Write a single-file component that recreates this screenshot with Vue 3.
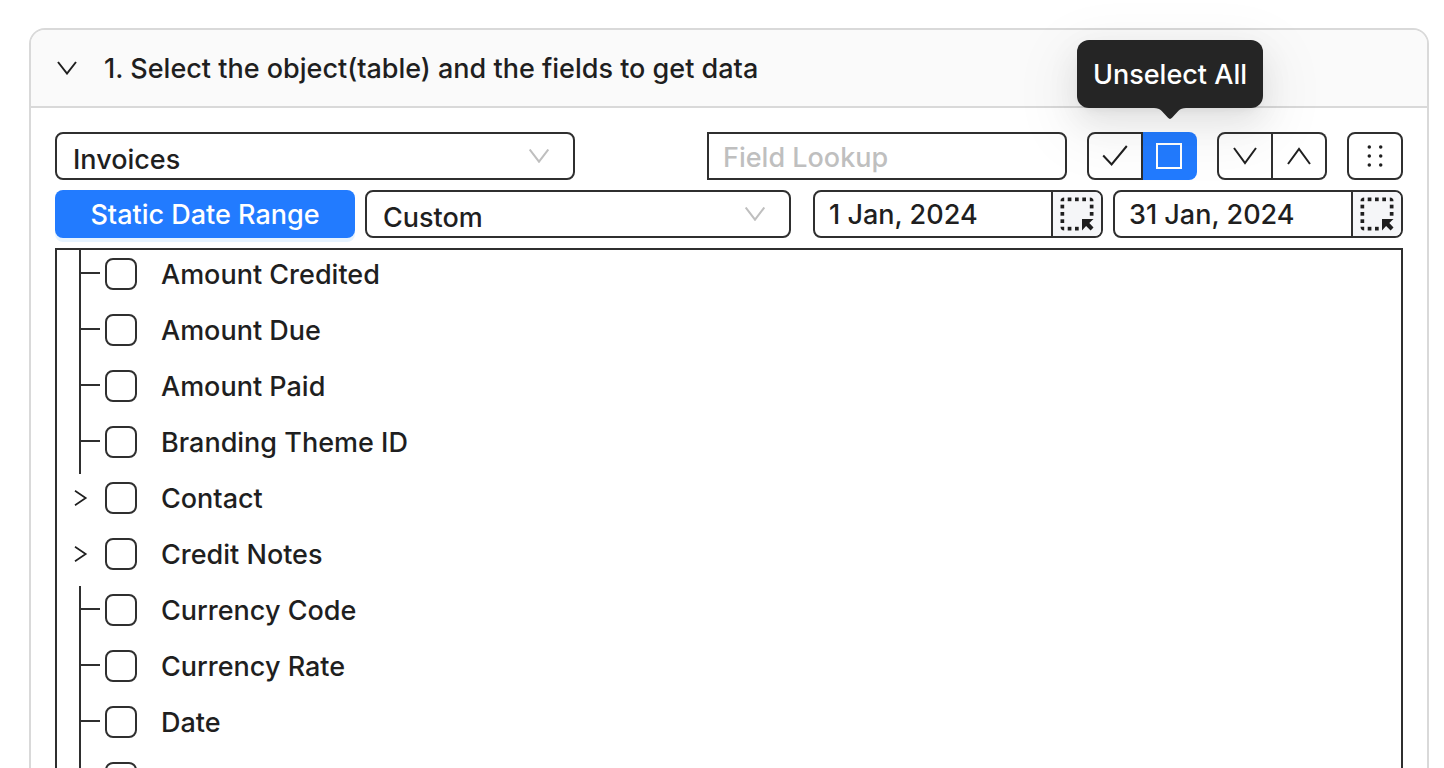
<script setup>
import { ref } from 'vue'

const objectName = ref('Invoices')
const lookup = ref('')
const range = ref('Custom')
const dates = ref([
  { id: 'date-from', label: 'Start date', value: '1 Jan, 2024' },
  { id: 'date-to', label: 'End date', value: '31 Jan, 2024' },
])
const fields = ref([
  { name: 'Amount Credited', checked: false },
  { name: 'Amount Due', checked: false },
  { name: 'Amount Paid', checked: false },
  { name: 'Branding Theme ID', checked: false },
  { name: 'Contact', checked: false, parent: true },
  { name: 'Credit Notes', checked: false, parent: true },
  { name: 'Currency Code', checked: false },
  { name: 'Currency Rate', checked: false },
  { name: 'Date', checked: false },
  { name: 'Due Date', checked: false },
])
const setAll = (value) => fields.value.forEach((f) => (f.checked = value))

// Dashed square outline of the range picker icon, on a 34px grid
const dots = [
  [7.7, 0.5], [15, 0.5], [22.3, 0.5],
  [0.5, 7.7], [0.5, 15], [0.5, 22.3],
  [29.8, 7.7], [29.8, 15],
  [7.7, 29.8], [15, 29.8],
]
</script>

<template>
  <main class="page">
    <section class="card">
      <header class="head">
        <button class="collapse" type="button" aria-label="Collapse section">
          <svg width="20" height="14" viewBox="0 0 20 14"><path d="M1 1 10 12.5 19 1" /></svg>
        </button>
        <h1>1. Select the object(table) and the fields to get data</h1>
      </header>

      <div class="body">
        <div class="row top">
          <div class="select object">
            <select v-model="objectName" aria-label="Object">
              <option>Invoices</option>
            </select>
            <svg width="20" height="14" viewBox="0 0 20 14"><path d="M.7.5 10 12.7 19.3.5" /></svg>
          </div>
          <div class="tools">
            <input v-model="lookup" class="lookup" type="text" placeholder="Field Lookup" aria-label="Field Lookup" />
            <div class="group">
              <button type="button" aria-label="Select All" @click="setAll(true)">
                <svg width="26" height="22" viewBox="0 0 26 22"><path d="M1.2 10.5 9.6 19.5 24.8 1" /></svg>
              </button>
              <button class="active" type="button" aria-describedby="tip" aria-label="Unselect All" @click="setAll(false)">
                <svg width="26" height="26" viewBox="0 0 26 26"><rect x="1" y="1" width="24" height="24" /></svg>
              </button>
              <div id="tip" class="tooltip" role="tooltip">
                Unselect All
                <svg class="arrow" width="32" height="12" viewBox="0 0 32 12">
                  <path d="M0 0H32C28.500 0 26.500.8 24.500 2.800L18 9.800Q16 12 14 9.800L7.500 2.800C5.500.8 3.500 0 0 0Z" />
                </svg>
              </div>
            </div>
            <div class="group">
              <button type="button" aria-label="Expand all">
                <svg width="24" height="18" viewBox="0 0 24 18"><path d="M1 1 12 16 23 1" /></svg>
              </button>
              <button type="button" aria-label="Collapse all">
                <svg width="24" height="18" viewBox="0 0 24 18"><path d="M1 17 12 2 23 17" /></svg>
              </button>
            </div>
            <div class="group single">
              <button type="button" aria-label="Rearrange">
                <svg class="solid" width="16" height="22" viewBox="0 0 16 22">
                  <template v-for="y in [2, 11, 20]" :key="y">
                    <circle cx="2.300" :cy="y" r="1.750" />
                    <circle cx="13.700" :cy="y" r="1.750" />
                  </template>
                </svg>
              </button>
            </div>
          </div>
        </div>

        <div class="row">
          <button class="primary" type="button">Static Date Range</button>
          <div class="select range">
            <select v-model="range" aria-label="Date range">
              <option>Custom</option>
            </select>
            <svg width="20" height="14" viewBox="0 0 20 14"><path d="M.7.5 10 12.7 19.3.5" /></svg>
          </div>
          <div class="dates">
            <div v-for="d in dates" :key="d.id" class="date">
              <input :id="d.id" v-model="d.value" type="text" :aria-label="d.label" />
              <button type="button" :aria-label="'Pick cell for ' + d.label">
                <svg class="solid" width="34" height="34" viewBox="0 0 34 34">
                  <rect v-for="(p, i) in dots" :key="i" :x="p[0]" :y="p[1]" width="3.700" height="3.700" />
                  <path d="M4.200.5v3.700H.5Q.5.500 4.200.5ZM29.800.5v3.700h3.700Q33.500.5 29.800.5ZM.5 29.800h3.700v3.700Q.5 33.500.5 29.800Z" />
                  <path d="M22 22h11.500l-4.200 4 4.200 4.500-2.900 2.900-4.500-4.300-4.100 4.400Z" />
                </svg>
              </button>
            </div>
          </div>
        </div>

        <ul class="tree">
          <li v-for="f in fields" :key="f.name">
            <button v-if="f.parent" class="twig" type="button" :aria-label="'Expand ' + f.name">
              <svg width="14" height="16" viewBox="0 0 14 16"><path d="M1 .8 11.700 8 1 15.200" stroke-width="1.700" /></svg>
            </button>
            <span v-else class="twig line"></span>
            <label><input v-model="f.checked" type="checkbox" /><span>{{ f.name }}</span></label>
          </li>
        </ul>
      </div>
    </section>
  </main>
</template>

<style>
body {
  margin: 0;
  background: #fff;
}
</style>

<style scoped>
* {
  box-sizing: border-box;
}
.page {
  height: 100vh;
  overflow: hidden;
  padding: 28px 15px 0 29px;
  color: #1f1f1f;
  font: 450 27px/44px Inter, "Liberation Sans", sans-serif;
}
button,
input,
select {
  margin: 0;
  padding: 0;
  border: 0;
  border-radius: 0;
  background: none;
  color: inherit;
  font: inherit;
  appearance: none;
  outline: none;
}
button {
  display: flex;
  align-items: center;
  justify-content: center;
  cursor: pointer;
}
svg {
  display: block;
  flex: none;
  fill: none;
  stroke: currentColor;
  stroke-width: 2;
}
.solid {
  fill: currentColor;
  stroke: none;
}
.card {
  border: 2px solid #d9d9d9;
  border-radius: 16px;
}
.head {
  display: flex;
  align-items: center;
  gap: 27px;
  height: 78px;
  padding: 0 26px;
  border-bottom: 2px solid #d9d9d9;
  border-radius: 14px 14px 0 0;
  background: #fafafa;
}
h1 {
  margin: 0;
  padding-top: 2px;
  font-size: inherit;
  font-weight: inherit;
}
.body {
  display: flex;
  flex-direction: column;
  gap: 10px;
  padding: 24px;
}
.row {
  display: flex;
  gap: 10px;
}
.top {
  justify-content: space-between;
}
.select {
  display: grid;
  align-items: center;
  height: 48px;
  border: 2px solid #2f2f2f;
  border-radius: 8px;
}
.select > * {
  grid-area: 1 / 1;
}
.select select {
  width: 100%;
  height: 44px;
  padding: 4px 60px 0 16px;
}
.select svg {
  justify-self: end;
  margin-right: 24px;
  color: #bfbfbf;
  pointer-events: none;
}
.object {
  width: 520px;
}
.range {
  flex: 1;
  margin-right: 12px;
}
.tools {
  display: flex;
  gap: 20px;
}
.lookup {
  width: 360px;
  height: 48px;
  padding: 2px 14px 0;
  border: 2px solid #2f2f2f;
  border-radius: 0 8px 8px 0;
}
.lookup::placeholder {
  color: #bfbfbf;
  opacity: 1;
}
.group {
  position: relative;
  display: flex;
}
.group button {
  width: 56px;
  height: 48px;
  border: 2px solid #2f2f2f;
}
.group button:first-child {
  border-radius: 8px 0 0 8px;
}
.group button:nth-child(2) {
  width: 54px;
  border-left: 0;
  border-radius: 0 8px 8px 0;
}
.group.single button {
  border-radius: 8px;
}
.group button.active {
  padding-right: 2px;
  border: 0;
  background: #227bff;
  color: #fff;
}
.tooltip {
  position: absolute;
  right: -66px;
  bottom: calc(100% + 24px);
  min-width: 186px;
  padding: 13px 14px 11px;
  border-radius: 12px;
  background: #252525;
  color: #fff;
  text-align: center;
  white-space: nowrap;
  box-shadow: 0 12px 32px rgba(0, 0, 0, 0.08), 0 6px 12px -8px rgba(0, 0, 0, 0.12),
    0 18px 56px 16px rgba(0, 0, 0, 0.05);
}
.arrow {
  position: absolute;
  top: 100%;
  left: calc(50% - 16px);
  fill: #252525;
  stroke: none;
}
.primary {
  width: 300px;
  height: 48px;
  padding-top: 2px;
  border-radius: 8px;
  background: #227bff;
  color: #fff;
  box-shadow: 0 4px 0 #e6f3ff;
}
.dates {
  display: flex;
  gap: 10px;
}
.date {
  display: flex;
  width: 290px;
  height: 48px;
  overflow: hidden;
  border: 2px solid #2f2f2f;
  border-radius: 8px;
}
.date input {
  flex: 1;
  min-width: 0;
  padding: 2px 14px 0;
}
.date button {
  width: 50px;
  border-left: 2px solid #2f2f2f;
  background: #f5f6f8;
}
.tree {
  margin: 0;
  padding: 0;
  border: 2px solid #2f2f2f;
  list-style: none;
}
.tree li {
  display: flex;
  height: 56px;
  padding-left: 17px;
}
.twig {
  flex: none;
  width: 26px;
  height: 48px;
  margin-right: 5px;
}
button.twig {
  justify-content: flex-start;
}
.twig.line {
  width: 21px;
  height: 56px;
  margin: 0 5px;
  border-left: 2px solid #2f2f2f;
  background: linear-gradient(#2f2f2f, #2f2f2f) 0 22px / 100% 2px no-repeat;
}
.tree label {
  display: flex;
  align-items: center;
  gap: 24px;
  height: 48px;
}
.tree label span {
  padding-top: 2px;
}
.tree input {
  width: 32px;
  height: 32px;
  border: 2px solid #2f2f2f;
  border-radius: 8px;
}
.tree input:checked {
  border-color: #227bff;
  background: #227bff;
}
</style>
